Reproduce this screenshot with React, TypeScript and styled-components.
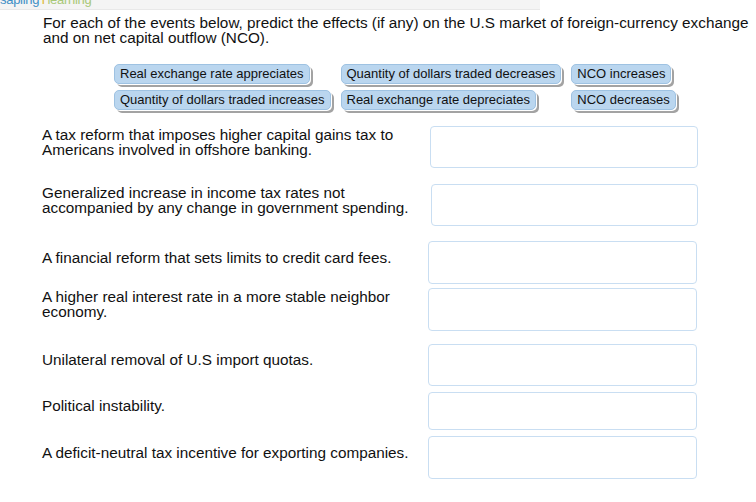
import styled, { createGlobalStyle } from 'styled-components';

const GlobalStyle = createGlobalStyle`
  body {
    margin: 0;
    background: #fff;
    font-family: "Liberation Sans", Arial, sans-serif;
    color: #111;
  }
`;

const Header = styled.div`
  width: 540px;
  height: 9px;
  background: #f4f4f4;
  border-bottom: 1px solid #e8e8e8;
  overflow: hidden;
`;

const Logo = styled.div`
  margin-top: -7px;
  font-size: 13px;
  line-height: 13px;
  letter-spacing: -0.3px;
  white-space: nowrap;
`;

const LogoPart = styled.span<{ $color: string }>`
  color: ${(p) => p.$color};
`;

const Main = styled.div`
  padding-left: 42px;
`;

const Prompt = styled.p`
  margin: 5px 0 0 1px;
  font-size: 15.3px;
  line-height: 15px;
  width: 712px;
`;

const ChipGrid = styled.div`
  display: grid;
  grid-template-columns: repeat(3, max-content);
  column-gap: 10px;
  row-gap: 6px;
  margin: 19px 0 0 72px;
`;

const Chip = styled.div`
  justify-self: start;
  height: 18px;
  padding: 0 5px;
  font-size: 13px;
  line-height: 18px;
  background: #bad6ef;
  border: 1px solid #9ec2e2;
  border-radius: 5px;
  box-shadow: 1px 1px 0 #fff, 3px 3px 0 #a3a3a3;
  white-space: nowrap;
`;

const Questions = styled.div`
  display: flex;
  flex-direction: column;
`;

const Row = styled.div<{ $gap: number }>`
  display: flex;
  align-items: center;
  margin-top: ${(p) => p.$gap}px;
`;

const Label = styled.div`
  flex: none;
  box-sizing: border-box;
  width: 386px;
  padding: 0 12px 11px 0;
  font-size: 15.3px;
  line-height: 15px;
`;

const AnswerBox = styled.div<{ $w: number; $h: number; $shift: number }>`
  flex: none;
  box-sizing: border-box;
  width: ${(p) => p.$w}px;
  height: ${(p) => p.$h}px;
  margin-left: ${(p) => p.$shift}px;
  background: #fff;
  border: 1px solid #c9def2;
  border-radius: 4px;
`;

const chips = [
  'Real exchange rate appreciates',
  'Quantity of dollars traded decreases',
  'NCO increases',
  'Quantity of dollars traded increases',
  'Real exchange rate depreciates',
  'NCO decreases',
];

const events = [
  { text: 'A tax reform that imposes higher capital gains tax to Americans involved in offshore banking.', gap: 16, h: 42, w: 268, shift: 2 },
  { text: 'Generalized increase in income tax rates not accompanied by any change in government spending.', gap: 16, h: 42, w: 267, shift: 3 },
  { text: 'A financial reform that sets limits to credit card fees.', gap: 15, h: 43, w: 269, shift: 0 },
  { text: 'A higher real interest rate in a more stable neighbor economy.', gap: 4, h: 43, w: 269, shift: 0 },
  { text: 'Unilateral removal of U.S import quotas.', gap: 13, h: 42, w: 269, shift: 0 },
  { text: 'Political instability.', gap: 6, h: 38, w: 269, shift: 0 },
  { text: 'A deficit-neutral tax incentive for exporting companies.', gap: 6, h: 43, w: 269, shift: 0 },
];

const App: React.FC = () => {
  return (
    <>
      <GlobalStyle />
      <Header>
        <Logo>
          <LogoPart $color="#3f8fc6">sapling</LogoPart>
          <LogoPart $color="#e0b93a">Y</LogoPart>
          <LogoPart $color="#a8c878">learning</LogoPart>
        </Logo>
      </Header>
      <Main>
        <Prompt>
          For each of the events below, predict the effects (if any) on the U.S market of foreign-currency exchange and on
          net capital outflow (NCO).
        </Prompt>
        <ChipGrid>
          {chips.map((c) => (
            <Chip key={c}>{c}</Chip>
          ))}
        </ChipGrid>
        <Questions>
          {events.map((e) => (
            <Row key={e.text} $gap={e.gap}>
              <Label>{e.text}</Label>
              <AnswerBox $w={e.w} $h={e.h} $shift={e.shift} />
            </Row>
          ))}
        </Questions>
      </Main>
    </>
  );
};

export default App;
